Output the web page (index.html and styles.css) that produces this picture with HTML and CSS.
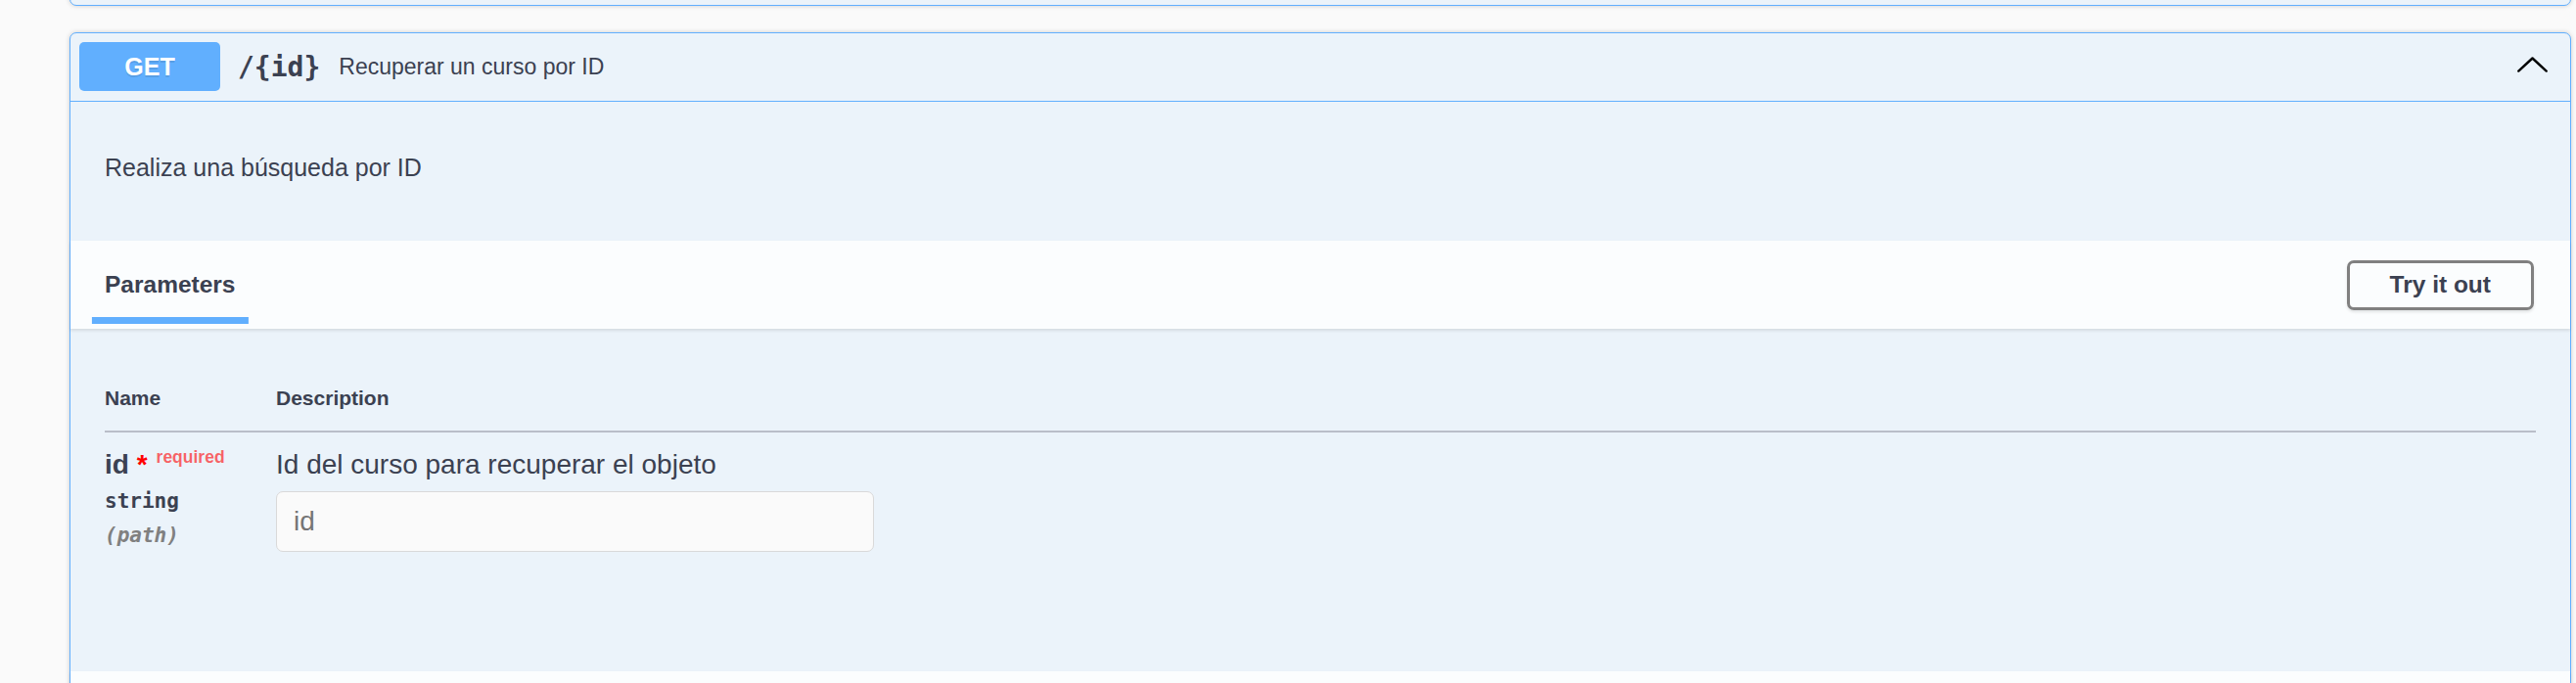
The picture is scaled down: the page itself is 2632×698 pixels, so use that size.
FILE: index.html
```html
<!DOCTYPE html>
<html lang="es">
<head>
<meta charset="utf-8">
<title>Swagger - GET /{id}</title>
<link rel="stylesheet" href="styles.css">
</head>
<body>
<div class="page">
  <div class="opblock prev"></div>
  <div class="opblock get">
    <div class="summary">
      <span class="method">GET</span>
      <span class="path">/{id}</span>
      <span class="summary-desc">Recuperar un curso por ID</span>
      <svg class="arrow" width="31" height="16" viewBox="0 0 31 16" aria-hidden="true">
        <polyline points="1.3,14.6 15.5,1.5 29.7,14.6" fill="none" stroke="#000" stroke-width="2.4" stroke-linecap="round" stroke-linejoin="round"/>
      </svg>
    </div>
    <div class="desc-wrap">
      <p>Realiza una búsqueda por ID</p>
    </div>
    <div class="section-header">
      <div class="tab-item"><h4><span>Parameters</span></h4></div>
      <button class="try-btn" type="button">Try it out</button>
    </div>
    <div class="params">
      <div class="param-head">
        <div>Name</div>
        <div>Description</div>
      </div>
      <div class="param-row">
        <div class="col-name">
          <div class="pname">id<span class="star">&nbsp;*</span><span class="req">required</span></div>
          <div class="ptype">string</div>
          <div class="pin">(path)</div>
        </div>
        <div class="col-desc">
          <p>Id del curso para recuperar el objeto</p>
          <input class="pinput" type="text" placeholder="id">
        </div>
      </div>
    </div>
    <div class="section-header responses"></div>
  </div>
</div>
</body>
</html>
```

FILE: styles.css
```css
html, body {
  margin: 0;
  padding: 0;
  height: 698px;
  overflow: hidden;
  background: #fafafa;
}

body {
  font-family: "Liberation Sans", Arial, sans-serif;
  color: #3b4151;
}

.page {
  padding: 0 5px 0 71px;
}

.opblock {
  border: 1px solid #61affe;
  border-radius: 7px;
  background: #ebf3fa;
  box-shadow: 0 0 5px rgba(0, 0, 0, 0.19);
}

.opblock.prev {
  height: 40px;
  box-sizing: border-box;
  margin-top: -34px;
  margin-bottom: 27px;
}

.summary {
  display: flex;
  align-items: center;
  padding: 9px 9px 10px 9px;
  border-bottom: 1px solid #61affe;
}

.method {
  width: 144px;
  height: 50px;
  line-height: 50px;
  text-align: center;
  background: #61affe;
  color: #fff;
  border-radius: 5px;
  font-size: 25px;
  font-weight: 700;
  text-shadow: 0 2px 0 rgba(0, 0, 0, 0.1);
}

.path {
  margin-left: 18px;
  font-family: "DejaVu Sans Mono", "Liberation Mono", monospace;
  font-size: 28px;
  font-weight: 700;
  color: #3b4151;
}

.summary-desc {
  flex: 1;
  margin-left: 19px;
  font-size: 23px;
  color: #3b4151;
}

.arrow {
  align-self: flex-start;
  margin-top: 15px;
  margin-right: 14px;
}

.desc-wrap {
  padding: 53px 35px 60px;
}

.desc-wrap p {
  margin: 0;
  font-size: 25px;
  line-height: 29px;
}

.section-header {
  height: 90px;
  box-sizing: border-box;
  display: flex;
  align-items: center;
  justify-content: space-between;
  padding: 0 37px 0 35px;
  background: rgba(255, 255, 255, 0.8);
  box-shadow: 0 2px 3px rgba(0, 0, 0, 0.1);
}

.tab-item h4 {
  margin: 0;
  font-size: 24.5px;
  font-weight: 700;
  color: #3b4151;
}

.tab-item span {
  position: relative;
}

.tab-item span::after {
  content: "";
  position: absolute;
  left: 50%;
  bottom: -27px;
  width: 120%;
  height: 7px;
  transform: translateX(-50%);
  background: #61affe;
}

.try-btn {
  height: 51px;
  padding: 0 41px;
  border: 3px solid #808080;
  border-radius: 7px;
  background: transparent;
  box-shadow: 0 2px 3px rgba(0, 0, 0, 0.1);
  font-family: "Liberation Sans", Arial, sans-serif;
  font-size: 24.5px;
  font-weight: 700;
  color: #3b4151;
}

.params {
  min-height: 350px;
  box-sizing: border-box;
  padding: 38px 35px 0;
}

.param-head {
  display: grid;
  grid-template-columns: 175px 1fr;
  padding: 21px 0;
  line-height: 24px;
  font-size: 21px;
  font-weight: 700;
  border-bottom: 2px solid #b9bec8;
}

.param-row {
  display: grid;
  grid-template-columns: 175px 1fr;
  padding-top: 17px;
}

.pname {
  font-size: 28px;
  line-height: 32px;
  font-weight: 700;
  white-space: nowrap;
}

.star {
  color: #ff0000;
}

.req {
  font-size: 17.5px;
  line-height: 0;
  font-weight: 700;
  color: rgba(255, 0, 0, 0.6);
  padding-left: 9px;
  vertical-align: 11px;
}

.ptype {
  font-family: "DejaVu Sans Mono", "Liberation Mono", monospace;
  font-size: 21px;
  line-height: 24px;
  font-weight: 700;
  padding: 9px 0;
}

.pin {
  font-family: "DejaVu Sans Mono", "Liberation Mono", monospace;
  font-size: 21px;
  line-height: 24px;
  font-style: italic;
  font-weight: 700;
  color: #808080;
  padding-top: 2px;
}

.col-desc p {
  margin: 0;
  font-size: 28px;
  line-height: 32px;
}

.pinput {
  display: block;
  box-sizing: border-box;
  width: 611px;
  height: 62px;
  margin-top: 11px;
  padding: 0 17px;
  border: 1px solid #d9d9d9;
  border-radius: 7px;
  background: #fafafa;
  font-family: "Liberation Sans", Arial, sans-serif;
  font-size: 28px;
  color: #3b4151;
}

.pinput::placeholder {
  color: #757575;
}
```
